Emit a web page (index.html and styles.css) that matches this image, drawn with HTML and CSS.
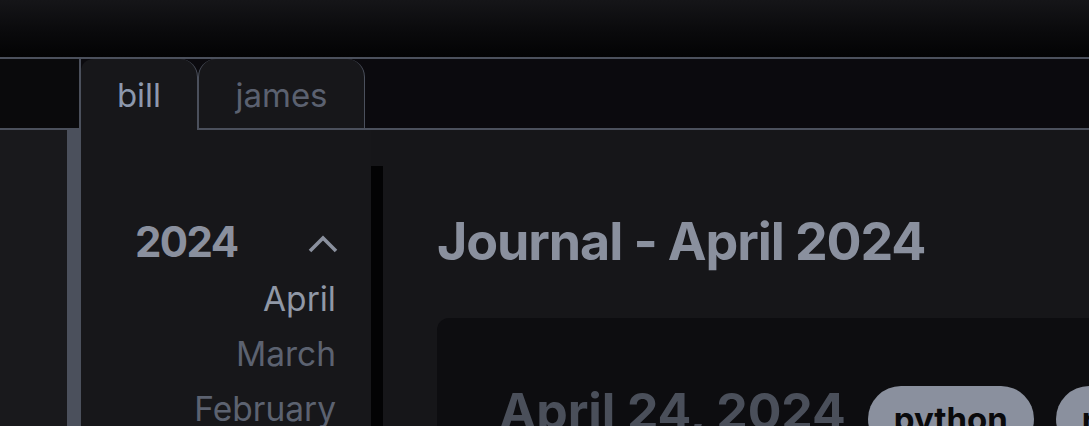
FILE: index.html
```html
<!DOCTYPE html>
<html>
<head>
<meta charset="utf-8">
<link rel="stylesheet" href="styles.css">
</head>
<body>
<div class="topbar"></div>
<div class="tabstrip">
  <div class="tab-spacer"></div>
  <div class="tab tab-active">bill</div>
  <div class="tab tab-idle">james</div>
  <div class="tab-fill"></div>
</div>
<div class="workspace">
  <div class="left-panel"></div>
  <div class="gutter"></div>
  <aside class="sidebar">
    <div class="year-row">
      <span class="year">2024</span>
      <svg class="chevron" width="30" height="20" viewBox="0 0 30 20"><polyline points="2,17 15,4 28,17" fill="none" stroke="#8a909e" stroke-width="3.6"/></svg>
    </div>
    <ul class="months">
      <li class="month month-active">April</li>
      <li class="month">March</li>
      <li class="month">February</li>
    </ul>
  </aside>
  <div class="divider"></div>
  <main class="main">
    <h1 class="title">Journal - April 2024</h1>
    <section class="card">
      <div class="entry-head">
        <h2 class="entry-date">April 24, 2024</h2>
        <span class="pill">python</span>
        <span class="pill">rust</span>
      </div>
    </section>
  </main>
</div>
</body>
</html>
```
FILE: styles.css
```css
* { box-sizing: border-box; }
html, body {
  margin: 0;
  padding: 0;
  width: 1089px;
  height: 426px;
  overflow: hidden;
  background: #161619;
  font-family: Inter, "Noto Sans", sans-serif;
}
.topbar {
  height: 57px;
  background: linear-gradient(to bottom, #151518 0%, #0a0a0c 55%, #030304 100%);
}
.tabstrip {
  display: flex;
  height: 73px;
  border-top: 2px solid #4b505c;
  background: #0b0a0e;
}
.tab-spacer {
  width: 81px;
  flex: none;
  background: #0a0a0c;
  border-right: 2px solid #4b505c;
  border-bottom: 2px solid #4b505c;
}
.tab {
  flex: none;
  display: flex;
  justify-content: center;
  font-size: 33px;
  line-height: 1;
  padding-top: 20px;
  background: #17171a;
}
.tab-active {
  width: 117px;
  color: #8c98ad;
  border-right: 1px solid #4b505c;
  border-top-left-radius: 12px;
  border-top-right-radius: 18px;
}
.tab-idle {
  width: 167px;
  color: #5b6170;
  border: 1px solid #4b505c;
  border-top: none;
  border-bottom-width: 2px;
  border-top-left-radius: 18px;
  border-top-right-radius: 18px;
}
.tab-fill {
  flex: 1;
  border-bottom: 2px solid #4b505c;
}
.workspace {
  display: flex;
  height: 296px;
}
.left-panel {
  width: 67px;
  flex: none;
  background: #19191c;
}
.gutter {
  width: 14px;
  flex: none;
  background: #4b505c;
}
.sidebar {
  width: 290px;
  flex: none;
  padding: 84px 35px 0 54px;
  background: #17171a;
}
.year-row {
  display: flex;
  justify-content: space-between;
  align-items: center;
  height: 55px;
}
.year {
  font-size: 42px;
  font-weight: 700;
  line-height: 55px;
  color: #8a909e;
  letter-spacing: -1.6px;
}
.chevron {
  margin-top: 4px;
  margin-right: -2px;
}
.months {
  list-style: none;
  margin: 3px 0 0;
  padding: 0;
  text-align: right;
}
.month {
  font-size: 33.5px;
  line-height: 55px;
  color: #5c6270;
}
.month-active {
  color: #9098a6;
}
.divider {
  width: 12px;
  flex: none;
  margin-top: 36px;
  background: #030304;
}
.main {
  flex: 1;
  min-width: 0;
  padding: 80px 0 0 54px;
  overflow: hidden;
  background: #161619;
}
.title {
  margin: 0;
  font-size: 52px;
  line-height: 64px;
  font-weight: 700;
  color: #8a909e;
  letter-spacing: -1.1px;
  white-space: nowrap;
}
.card {
  margin-top: 44px;
  height: 200px;
  background: #0d0d10;
  border-radius: 12px 0 0 0;
  padding: 63px 0 0 62px;
}
.entry-head {
  display: flex;
  align-items: flex-start;
  gap: 22px;
  white-space: nowrap;
}
.entry-date {
  margin: 0;
  font-size: 50px;
  line-height: 60px;
  font-weight: 700;
  color: #4a4f5a;
  letter-spacing: -0.1px;
}
.pill {
  flex: none;
  margin-top: 5px;
  padding: 13px 26px;
  border-radius: 999px;
  background: #8a909e;
  color: #0a0a0c;
  font-size: 33px;
  line-height: 40px;
  font-weight: 700;
}
```
